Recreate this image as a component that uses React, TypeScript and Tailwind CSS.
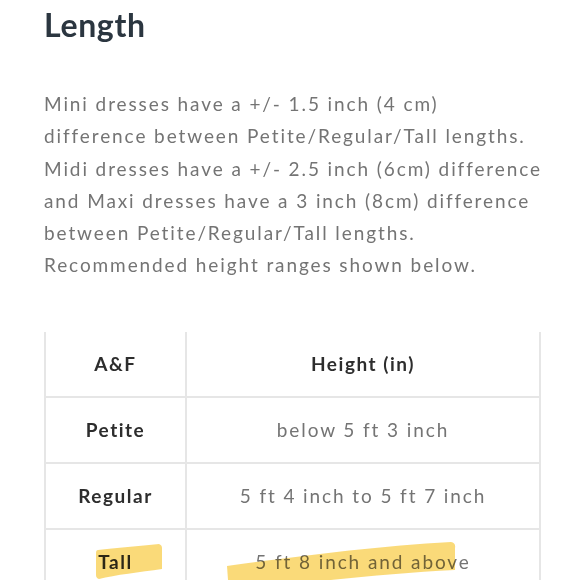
import React from 'react';

const rows = [
  { size: 'Petite', range: 'below 5 ft 3 inch' },
  { size: 'Regular', range: '5 ft 4 inch to 5 ft 7 inch' },
  { size: 'Tall', range: '5 ft 8 inch and above' },
];

const App: React.FC = () => {
  return (
    <div className="w-[580px] h-[580px] overflow-hidden bg-white pl-[44px] pt-[5px] font-['Lato',sans-serif]">
      <h2 className="text-[32px] font-bold text-[#2b3640] leading-[40px] tracking-[0.02em]">Length</h2>

      <p className="mt-[43px] text-[19px] leading-[32.3px] tracking-[0.1em] text-[#747474]">
        Mini dresses have a +/- 1.5 inch (4 cm)<br />
        difference between Petite/Regular/Tall lengths.<br />
        Midi dresses have a +/- 2.5 inch (6cm) difference<br />
        and Maxi dresses have a 3 inch (8cm) difference<br />
        between Petite/Regular/Tall lengths.<br />
        Recommended height ranges shown below.
      </p>

      <table className="mt-[50px] w-[497px] border-collapse text-[19px]">
        <thead>
          <tr className="h-[65px]">
            <th className="w-[141px] border-2 border-t-0 border-[#e6e6e6] font-bold tracking-[0.08em] text-[#2d2d2d]">A&amp;F</th>
            <th className="border-2 border-t-0 border-[#e6e6e6] font-bold tracking-[0.08em] text-[#2d2d2d]">Height (in)</th>
          </tr>
        </thead>
        <tbody>
          {rows.map((r) => (
            <tr key={r.size} className="h-[66px]">
              <td className="relative border-2 border-[#e6e6e6] text-center font-bold tracking-[0.08em] text-[#2d2d2d]">
                {r.size}
                {r.size === 'Tall' && (
                  <svg className="absolute left-[49px] top-[14px] mix-blend-multiply" width="68" height="36" viewBox="0 0 68 36">
                    <path d="M3 6 C20 4 45 2 64 0 Q67 1 67 4 L67 25 C45 28 20 31 4 35 Q1 34 1 31 L1 9 Q1 6 3 6 Z" fill="#f9d462" fillOpacity="0.85" />
                  </svg>
                )}
              </td>
              <td className="relative border-2 border-[#e6e6e6] text-center tracking-[0.1em] text-[#747474]">
                {r.range}
                {r.size === 'Tall' && (
                  <svg className="absolute left-[38px] top-[10px] mix-blend-multiply" width="232" height="54" viewBox="0 0 232 54">
                    <path d="M2 26 C60 18 150 6 226 2 Q231 3 230 8 L230 30 C150 34 60 44 4 54 Z" fill="#f9d462" fillOpacity="0.85" />
                  </svg>
                )}
              </td>
            </tr>
          ))}
        </tbody>
      </table>
    </div>
  );
};

export default App;
